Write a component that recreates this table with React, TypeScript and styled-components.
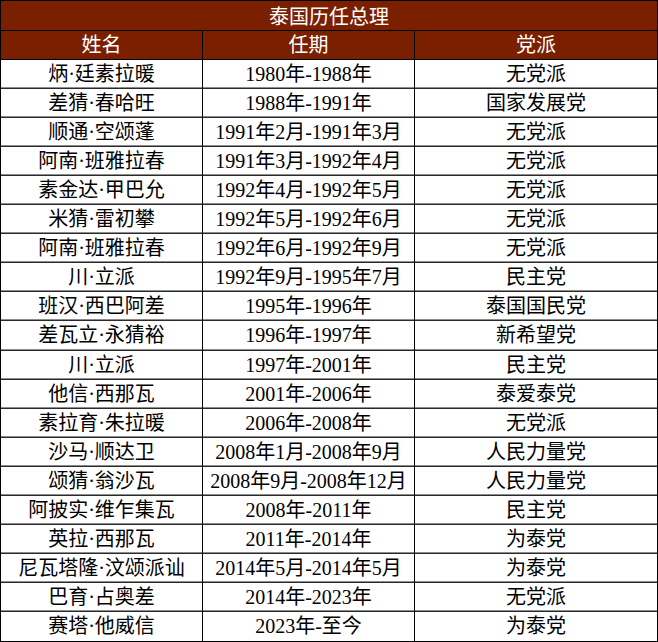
import styled, { createGlobalStyle } from "styled-components";

const GlobalStyle = createGlobalStyle`
  html, body {
    margin: 0;
    padding: 0;
    background: #ffffff;
  }
`;

const rows: [string, string, string][] = [
  ["炳·廷素拉暖", "1980年-1988年", "无党派"],
  ["差猜·春哈旺", "1988年-1991年", "国家发展党"],
  ["顺通·空颂蓬", "1991年2月-1991年3月", "无党派"],
  ["阿南·班雅拉春", "1991年3月-1992年4月", "无党派"],
  ["素金达·甲巴允", "1992年4月-1992年5月", "无党派"],
  ["米猜·雷初攀", "1992年5月-1992年6月", "无党派"],
  ["阿南·班雅拉春", "1992年6月-1992年9月", "无党派"],
  ["川·立派", "1992年9月-1995年7月", "民主党"],
  ["班汉·西巴阿差", "1995年-1996年", "泰国国民党"],
  ["差瓦立·永猜裕", "1996年-1997年", "新希望党"],
  ["川·立派", "1997年-2001年", "民主党"],
  ["他信·西那瓦", "2001年-2006年", "泰爱泰党"],
  ["素拉育·朱拉暖", "2006年-2008年", "无党派"],
  ["沙马·顺达卫", "2008年1月-2008年9月", "人民力量党"],
  ["颂猜·翁沙瓦", "2008年9月-2008年12月", "人民力量党"],
  ["阿披实·维乍集瓦", "2008年-2011年", "民主党"],
  ["英拉·西那瓦", "2011年-2014年", "为泰党"],
  ["尼瓦塔隆·汶颂派讪", "2014年5月-2014年5月", "为泰党"],
  ["巴育·占奥差", "2014年-2023年", "无党派"],
  ["赛塔·他威信", "2023年-至今", "为泰党"],
];

const Table = styled.div`
  box-sizing: border-box;
  width: 658px;
  height: 642px;
  border: 1px solid #000;
  display: grid;
  grid-template-columns: 202px 212px 1fr;
  grid-template-rows: repeat(22, 1fr);
  font-family: "Liberation Serif", "Noto Sans CJK SC", serif;
  font-size: 20px;
  color: #000;
`;

const Title = styled.div`
  grid-column: 1 / -1;
  background: #7a2000;
  color: #fff;
  border-bottom: 1px solid #000;
  display: flex;
  align-items: center;
  justify-content: center;
`;

const Cell = styled.div<{ $head?: boolean; $last?: boolean; $bottom?: boolean }>`
  display: flex;
  align-items: center;
  justify-content: center;
  white-space: nowrap;
  border-right: ${(p) => (p.$last ? "none" : "1px solid #000")};
  border-bottom: ${(p) =>
    p.$bottom ? "none" : p.$head ? "1px solid #000" : "1px solid #2a2a2a"};
  box-shadow: ${(p) =>
    p.$bottom || p.$head ? "none" : "inset 0 -1px 0 #8c8c8c"};
  background: ${(p) => (p.$head ? "#7a2000" : "#fff")};
  color: ${(p) => (p.$head ? "#fff" : "#000")};
  line-height: 1;
`;

export default function App() {
  return (
    <>
      <GlobalStyle />
      <Table>
        <Title>泰国历任总理</Title>
        <Cell $head>姓名</Cell>
        <Cell $head>任期</Cell>
        <Cell $head $last>
          党派
        </Cell>
        {rows.map((r, i) => {
          const bottom = i === rows.length - 1;
          return [
            <Cell key={`a${i}`} $bottom={bottom}>
              {r[0]}
            </Cell>,
            <Cell key={`b${i}`} $bottom={bottom}>
              {r[1]}
            </Cell>,
            <Cell key={`c${i}`} $last $bottom={bottom}>
              {r[2]}
            </Cell>,
          ];
        })}
      </Table>
    </>
  );
}
